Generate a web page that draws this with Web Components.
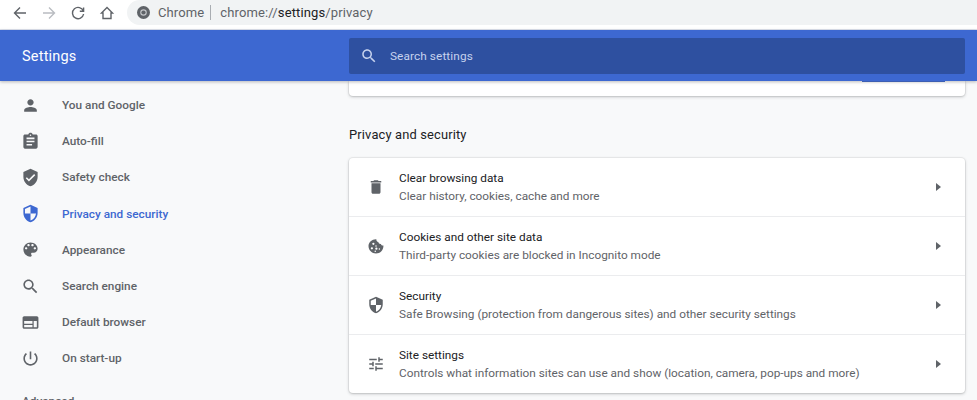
<!DOCTYPE html>
<html>
<head>
<meta charset="utf-8">
<title>Settings</title>
<style>
html, body { margin: 0; height: 400px; overflow: hidden; background: #f8f9fa; font-family: Roboto, "Liberation Sans", sans-serif; }
</style>
</head>
<body>
<browser-bar></browser-bar>
<settings-header></settings-header>
<settings-body>
  <settings-nav slot="nav"></settings-nav>
  <settings-main slot="main"></settings-main>
</settings-body>
<script>
const ICONS = {
    person: '<path d="M12 12c2.21 0 4-1.79 4-4s-1.79-4-4-4-4 1.79-4 4 1.79 4 4 4zm0 2c-2.67 0-8 1.34-8 4v2h16v-2c0-2.66-5.33-4-8-4z"/>',
    assignment: '<path d="M19 3h-4.18C14.4 1.84 13.3 1 12 1c-1.3 0-2.4.84-2.82 2H5c-1.1 0-2 .9-2 2v14c0 1.1.9 2 2 2h14c1.1 0 2-.9 2-2V5c0-1.1-.9-2-2-2zm-7 0c.55 0 1 .45 1 1s-.45 1-1 1-1-.45-1-1 .45-1 1-1zm2 14H7v-2h7v2zm3-4H7v-2h10v2zm0-4H7V7h10v2z"/>',
    verified: '<path d="M12 1L3 5v6c0 5.55 3.84 10.74 9 12 5.16-1.26 9-6.45 9-12V5l-9-4zm-2 16l-4-4 1.41-1.41L10 14.17l6.59-6.59L18 9l-8 8z"/>',
    shield: '<path d="M12 1L3 5v6c0 5.55 3.84 10.74 9 12 5.16-1.26 9-6.45 9-12V5l-9-4zm0 10.99h7c-.53 4.12-3.28 7.79-7 8.94V12H5V6.3l7-3.11v8.8z"/>',
    palette: '<path d="M12 3c-4.97 0-9 4.03-9 9s4.03 9 9 9c.83 0 1.5-.67 1.5-1.5 0-.39-.15-.74-.39-1.01-.23-.26-.38-.61-.38-.99 0-.83.67-1.5 1.5-1.5H16c2.76 0 5-2.24 5-5 0-4.42-4.03-8-9-8zm-5.5 9c-.83 0-1.5-.67-1.5-1.5S5.67 9 6.5 9 8 9.67 8 10.5 7.33 12 6.5 12zm3-4C8.67 8 8 7.33 8 6.5S8.67 5 9.5 5s1.5.67 1.5 1.5S10.33 8 9.5 8zm5 0c-.83 0-1.5-.67-1.5-1.5S13.67 5 14.5 5s1.5.67 1.5 1.5S15.33 8 14.5 8zm3 4c-.83 0-1.5-.67-1.5-1.5S16.67 9 17.5 9s1.5.67 1.5 1.5-.67 1.5-1.5 1.5z"/>',
    search: '<path d="M15.5 14h-.79l-.28-.27C15.41 12.59 16 11.11 16 9.5 16 5.91 13.09 3 9.5 3S3 5.91 3 9.5 5.91 16 9.5 16c1.61 0 3.09-.59 4.23-1.57l.27.28v.79l5 4.99L20.49 19l-4.99-5zm-6 0C7.01 14 5 11.99 5 9.5S7.01 5 9.5 5 14 7.01 14 9.5 11.99 14 9.5 14z"/>',
    web: '<path fill-rule="evenodd" d="M4 4h16c1.1 0 2 .9 2 2v12c0 1.1-.9 2-2 2H4c-1.1 0-2-.9-2-2V6c0-1.1.9-2 2-2zm0 6v3.5h10.5V10H4zm0 5v3h10.5v-3H4zm12-5v8h4v-8h-4z"/>',
    power: '<path d="M13 3h-2v10h2V3zm4.83 2.17l-1.42 1.42C17.99 7.86 19 9.81 19 12c0 3.87-3.13 7-7 7s-7-3.13-7-7c0-2.19 1.01-4.14 2.58-5.42L6.17 5.17C4.23 6.82 3 9.26 3 12c0 4.97 4.03 9 9 9s9-4.03 9-9c0-2.74-1.23-5.18-3.17-6.83z"/>',
    trash: '<path d="M6 19c0 1.1.9 2 2 2h8c1.1 0 2-.9 2-2V7H6v12zM19 4h-3.5l-1-1h-5l-1 1H5v2h14V4z"/>',
    cookie: '<path fill-rule="evenodd" d="M21.9 11.3c-1.7.2-2.9-.6-3.3-2.1-1.8.3-3.3-.9-3.5-2.6-1.7-.2-2.9-1.900-2.600-3.600C7 2.600 2 7 2 12c0 5.500 4.500 10 10 10 5.700 0 10.300-4.900 9.900-10.700zM8.500 7.500a1.500 1.500 0 1 1 0 3 1.500 1.500 0 0 1 0-3zm-2 6a1.500 1.500 0 1 1 0 3 1.500 1.500 0 0 1 0-3zm6 .5a1.500 1.500 0 1 1 0 3 1.500 1.500 0 0 1 0-3zm-.500-3a1 1 0 1 1 0 2 1 1 0 0 1 0-2zm4.500 4a1 1 0 1 1 0 2 1 1 0 0 1 0-2zM11 18a1 1 0 1 1 0 2 1 1 0 0 1 0-2z"/>',
    tune: '<path d="M3 17v2h6v-2H3zM3 5v2h10V5H3zm10 16v-2h8v-2h-8v-2h-2v6h2zM7 9v2H3v2h4v2h2V9H7zm14 4v-2H11v2h10zm-6-4h2V7h4V5h-4V3h-2v6z"/>'
};

function icon(name) {
    return `<svg viewBox="0 0 24 24" fill="currentColor" aria-hidden="true">${ICONS[name]}</svg>`;
}

class BrowserBar extends HTMLElement {
    constructor() {
        super();
        this.attachShadow({ mode: 'open' }).innerHTML = `
        <style>
            :host { display: flex; align-items: flex-start; height: 29px; background: #fff; border-bottom: 1px solid #dfe3ee; color: #5f6368; }
            .nav { display: flex; align-items: center; height: 26px; padding-left: 12px; gap: 13px; }
            .nav svg { width: 16px; height: 16px; display: block; fill: none; stroke: #5f6368; stroke-width: 1.4; }
            .nav svg.off { stroke: #b9bcc1; }
            .pill { flex: 1; height: 25px; margin-left: 12px; background: #f1f3f4; border-radius: 13px 0 0 13px; display: flex; align-items: center; padding-left: 10px; font-size: 13px; letter-spacing: .12px; }
            .pill svg { width: 13px; height: 13px; display: block; margin-right: 8px; }
            .sep { width: 1px; height: 15px; background: #a9adb2; margin: 0 9px 0 6px; }
            b { font-weight: 400; color: #202124; }
        </style>
        <div class="nav">
            <svg viewBox="0 0 16 16"><path d="M14 8H2.500M8 2.500 2.500 8 8 13.500"/></svg>
            <svg class="off" viewBox="0 0 16 16"><path d="M2 8h11.500M8 2.500 13.500 8 8 13.500"/></svg>
            <svg viewBox="0 0 16 16"><path d="M13.300 6A5.600 5.600 0 1 0 13.600 9M13.600 2.500V6.300H9.800"/></svg>
            <svg viewBox="0 0 16 16"><path d="M8 2.500 2.500 8H4v5.500h8V8h1.500z"/></svg>
        </div>
        <div class="pill">
            <svg viewBox="0 0 16 16"><circle cx="8" cy="8" r="8" fill="#5f6368"/><circle cx="8" cy="8" r="4" fill="#c4c6c9"/><circle cx="8" cy="8" r="2.600" fill="#5f6368"/></svg>
            <span>Chrome</span><span class="sep"></span>
            <span>chrome://<b>settings</b>/privacy</span>
        </div>`;
    }
}

class SettingsHeader extends HTMLElement {
    constructor() {
        super();
        this.attachShadow({ mode: 'open' }).innerHTML = `
        <style>
            :host { display: flex; position: relative; z-index: 2; align-items: center; height: 51px; background: #3d68d1; box-shadow: 0 1px 3px rgba(60,64,67,.35); }
            h1 { width: 349px; margin: 0; padding: 1px 0 0 22px; box-sizing: border-box; font: 400 14.500px Roboto, sans-serif; color: #fff; letter-spacing: .2px; }
            .search { flex: none; width: 616px; height: 36px; display: flex; align-items: center; background: #2e50a0; border-radius: 2px; color: #c6d2ee; font-size: 11.800px; letter-spacing: .1px; }
            svg { width: 18px; height: 18px; margin: 0 12px 0 11px; fill: currentColor; display: block; }
        </style>
        <h1>Settings</h1>
        <div class="search">${icon('search')}<span>Search settings</span></div>`;
    }
}

class SettingsBody extends HTMLElement {
    constructor() {
        super();
        this.attachShadow({ mode: 'open' }).innerHTML = `
        <style>
            :host { display: grid; grid-template-columns: 349px 616px; height: 319px; overflow: hidden; background: #f8f9fa; }
        </style>
        <slot name="nav"></slot>
        <slot name="main"></slot>`;
    }
}

class NavItem extends HTMLElement {
    constructor() {
        super();
        const active = this.hasAttribute('active');
        this.attachShadow({ mode: 'open' }).innerHTML = `
        <style>
            :host { display: flex; align-items: center; height: 36.200px; padding-left: 21px; font-size: 11.800px; font-weight: 500; color: ${active ? '#3d68d1' : '#5f6368'}; }
            svg { width: 19px; height: 19px; margin-right: 22px; fill: currentColor; display: block; }
        </style>
        ${icon(this.getAttribute('icon'))}<slot></slot>`;
    }
}

class SettingsNav extends HTMLElement {
    constructor() {
        super();
        const items = [
            ['person', 'You and Google'], ['assignment', 'Auto-fill'], ['verified', 'Safety check'],
            ['shield', 'Privacy and security', true], ['palette', 'Appearance'], ['search', 'Search engine'],
            ['web', 'Default browser'], ['power', 'On start-up']
        ];
        this.attachShadow({ mode: 'open' }).innerHTML = `
        <style>
            :host { display: block; padding-top: 6px; }
            .adv { padding: 17px 0 0 22px; font-size: 11.800px; font-weight: 500; color: #5f6368; }
        </style>
        ${items.map(i => `<nav-item icon="${i[0]}"${i[2] ? ' active' : ''}>${i[1]}</nav-item>`).join('')}
        <div class="adv">Advanced</div>`;
    }
}

class SettingsRow extends HTMLElement {
    constructor() {
        super();
        this.attachShadow({ mode: 'open' }).innerHTML = `
        <style>
            :host { display: flex; align-items: center; height: 58px; padding: 0 24px 0 18px; border-top: 1px solid #ebecee; color: #5f6368; }
            :host(:first-child) { border-top: 0; }
            svg { width: 18px; height: 18px; margin-right: 14px; fill: currentColor; display: block; flex: none; }
            .text { flex: 1; font-size: 11.800px; line-height: 18px; }
            .title { color: #202124; }
            .arrow { width: 0; height: 0; border-left: 5px solid #5f6368; border-top: 4px solid transparent; border-bottom: 4px solid transparent; }
        </style>
        ${icon(this.getAttribute('icon'))}
        <div class="text">
            <div class="title">${this.getAttribute('title')}</div>
            <div><slot></slot></div>
        </div>
        <div class="arrow"></div>`;
    }
}

class SettingsMain extends HTMLElement {
    constructor() {
        super();
        this.attachShadow({ mode: 'open' }).innerHTML = `
        <style>
            :host { display: block; }
            .card { background: #fff; border-radius: 4px; box-shadow: 0 0 0 1px rgba(60,64,67,.06), 0 1px 3px rgba(60,64,67,.3); }
            .stub { height: 15px; border-radius: 0 0 4px 4px; padding-right: 20px; display: flex; justify-content: flex-end; }
            .stub i { width: 83px; height: 1px; background: #3d68d1; }
            h2 { margin: 29px 0 14px; font-size: 12.900px; line-height: 19px; font-weight: 400; letter-spacing: .15px; color: #202124; }
        </style>
        <div class="card stub"><i></i></div>
        <h2>Privacy and security</h2>
        <div class="card">
            <settings-row icon="trash" title="Clear browsing data">Clear history, cookies, cache and more</settings-row>
            <settings-row icon="cookie" title="Cookies and other site data">Third-party cookies are blocked in Incognito mode</settings-row>
            <settings-row icon="shield" title="Security">Safe Browsing (protection from dangerous sites) and other security settings</settings-row>
            <settings-row icon="tune" title="Site settings">Controls what information sites can use and show (location, camera, pop-ups and more)</settings-row>
        </div>`;
    }
}

customElements.define('browser-bar', BrowserBar);
customElements.define('settings-header', SettingsHeader);
customElements.define('settings-body', SettingsBody);
customElements.define('nav-item', NavItem);
customElements.define('settings-nav', SettingsNav);
customElements.define('settings-row', SettingsRow);
customElements.define('settings-main', SettingsMain);
</script>
</body>
</html>
